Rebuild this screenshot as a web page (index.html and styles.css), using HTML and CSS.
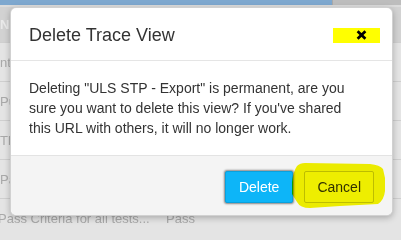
FILE: index.html
```html
<!DOCTYPE html>
<html>
<head>
<meta charset="utf-8">
<link rel="stylesheet" href="styles.css">
</head>
<body>
<div class="page">
  <div class="topbar"><div class="topbar-blue"></div><div class="topbar-gray"></div></div>
  <div class="table">
    <div class="row head"><span class="c1">Na</span></div>
    <div class="row"><span class="c1">nt</span></div>
    <div class="row"><span class="c1">Pu</span></div>
    <div class="row"><span class="c1">Th</span></div>
    <div class="row"><span class="c1">Pa</span></div>
    <div class="row"><span class="c1 shift">Pass Criteria for all tests...</span><span class="c2">Pass</span></div>
  </div>
  <div class="modal">
    <div class="modal-header">
      <h4 class="modal-title">Delete Trace View</h4>
      <button class="close" type="button">
        <svg width="11" height="10" viewBox="0 0 11 10"><path d="M1.6 1.2 L9.4 8.8 M9.4 1.2 L1.6 8.8" stroke="#000" stroke-width="2.7" fill="none"/></svg>
      </button>
    </div>
    <div class="modal-body">Deleting "ULS STP - Export" is permanent, are you sure you want to delete this view? If you've shared this URL with others, it will no longer work.</div>
    <div class="modal-footer">
      <button class="btn btn-primary" type="button">Delete</button>
      <button class="btn btn-default" type="button">Cancel</button>
    </div>
  </div>
  <svg class="highlight" width="96" height="50" viewBox="0 0 96 50"><path d="M7 6 Q10 3 15 3 L80 4 Q90 5 93 9 L95 18 L95 31 Q94 40 88 44 L50 46 L20 48 Q10 48 7 42 L2 34 L2 22 Q3 12 7 6 Z" fill="#f6f600"/></svg>
</div>
</body>
</html>
```
FILE: styles.css
```css
html, body {
  margin: 0;
  padding: 0;
}
body {
  font-family: "Liberation Sans", Arial, sans-serif;
  background: #e4e4e4;
  overflow: hidden;
}
.page {
  position: relative;
  width: 401px;
  height: 227px;
  overflow: hidden;
  background: #e4e4e4;
}
.topbar {
  display: flex;
  height: 5px;
}
.topbar-blue {
  width: 332px;
  background: #7ea8cf;
}
.topbar-gray {
  flex: 1;
  background: #bdbdbd;
  border-left: 1px solid #a9a9a9;
}
.table {
  display: flex;
  flex-direction: column;
  font-size: 13px;
  color: #a9a9a9;
}
.row {
  height: 38px;
  border-bottom: 1px solid #cfcfcf;
  display: flex;
  align-items: center;
  white-space: nowrap;
}
.row.head {
  height: 35px;
  background: #d2d2d2;
  color: #eaeaea;
  font-weight: bold;
  border-top: 2px solid #dcdcdc;
}
.c1 {
  width: 166px;
}
.c1.shift {
  margin-left: -2px;
  width: 168px;
}
.c2 {
  width: 60px;
}
.modal {
  position: absolute;
  left: 10px;
  top: 7px;
  width: 381px;
  background: #fff;
  border: 1px solid rgba(0, 0, 0, 0.18);
  border-radius: 6px;
  box-shadow: 0 2px 6px rgba(0, 0, 0, 0.25);
  color: #333;
}
.modal-header {
  display: flex;
  justify-content: space-between;
  align-items: center;
  padding: 14px 12px 12px 18px;
  border-bottom: 1px solid #e5e5e5;
}
.modal-title {
  margin: 0;
  font-size: 18px;
  font-weight: normal;
  line-height: 26px;
}
.close {
  width: 47px;
  height: 15px;
  background: #ffff00;
  border: 0;
  padding: 0 13px 0 0;
  margin: 0;
  display: flex;
  justify-content: flex-end;
  align-items: center;
}
.close svg {
  display: block;
}
.modal-body {
  padding: 17px 28px 17px 18px;
  font-size: 14px;
  line-height: 20px;
}
.modal-footer {
  display: flex;
  justify-content: flex-end;
  gap: 11px;
  padding: 15px 18px 12px;
  background: #f4f4f4;
  border-top: 1px solid #e3e3e3;
  border-radius: 0 0 6px 6px;
}
.btn {
  font-family: "Liberation Sans", Arial, sans-serif;
  font-size: 14px;
  line-height: 20px;
  padding: 5px 13px;
  border: 1px solid transparent;
  border-radius: 2px;
  margin: 0;
}
.btn-primary {
  background: #0db5f8;
  color: #fff;
  border-color: #0aa0dc;
  box-shadow: 0 0 2px 1px rgba(0, 0, 0, 0.45);
}
.btn-default {
  background: #f7f7f7;
  color: #333;
  border-color: #c4c4c4;
  padding: 5px 12px;
}
.highlight {
  position: absolute;
  left: 290px;
  top: 160px;
  mix-blend-mode: multiply;
}
```
